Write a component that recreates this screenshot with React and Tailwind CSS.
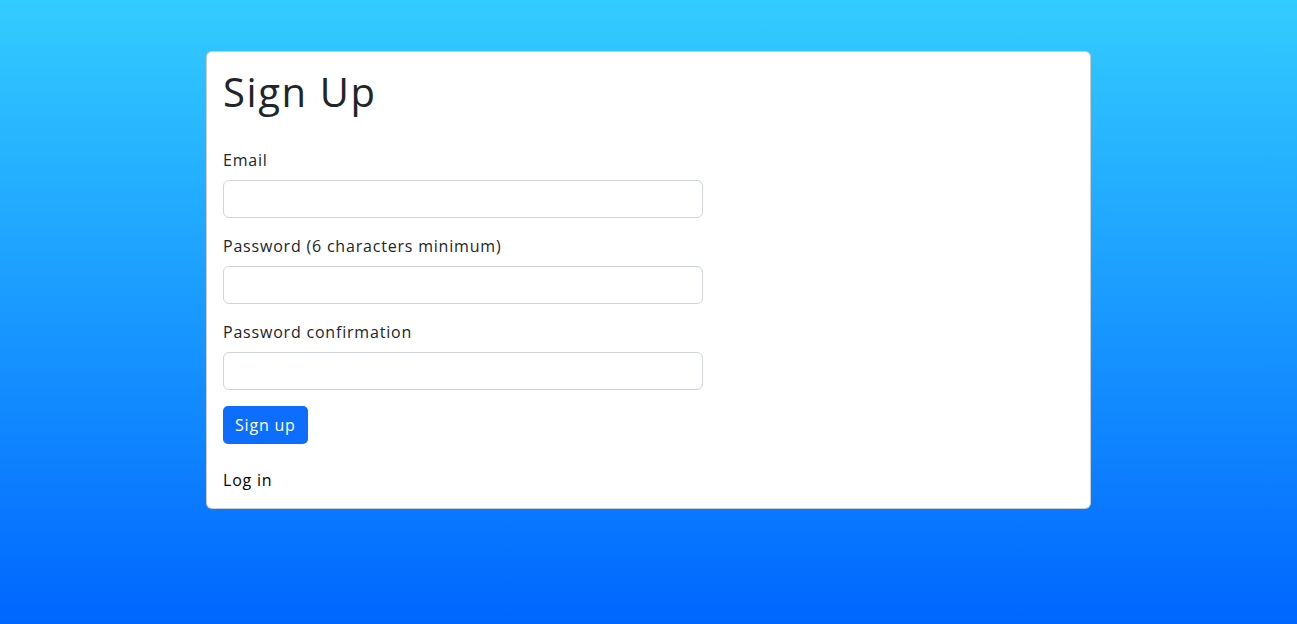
import React from 'react';

const Field = ({ label, type }) => (
    <div className="mb-4">
        <label className="block mb-2 text-base leading-6 tracking-[0.05em] text-[#212529]">{label}</label>
        <input
            type={type}
            className="block w-[480px] h-[38px] px-3 border border-[#ced4da] rounded-[6px] bg-white"
        />
    </div>
);

const App = () => {
    return (
        <div
            className="min-h-screen bg-linear-to-b/srgb from-[#33ccff] to-[#0066ff] pt-[51px]"
            style={{ fontFamily: '"Open Sans", sans-serif' }}
        >
            <div className="ml-[206px] w-[885px] bg-white border border-black/20 rounded-[6px] p-4">
                <h1 className="text-[40px] leading-[48px] tracking-[0.04em] text-[#212529] mb-8">Sign Up</h1>
                <form>
                    <Field label="Email" type="email" />
                    <Field label="Password (6 characters minimum)" type="password" />
                    <Field label="Password confirmation" type="password" />
                    <button
                        type="button"
                        className="h-[38px] px-3 bg-[#0d6efd] text-white text-base tracking-[0.05em] rounded-[5px]"
                    >
                        Sign up
                    </button>
                </form>
                <div className="mt-6 leading-6 tracking-[0.05em] text-black">
                    <a href="#">Log in</a>
                </div>
            </div>
        </div>
    );
};

export default App;
